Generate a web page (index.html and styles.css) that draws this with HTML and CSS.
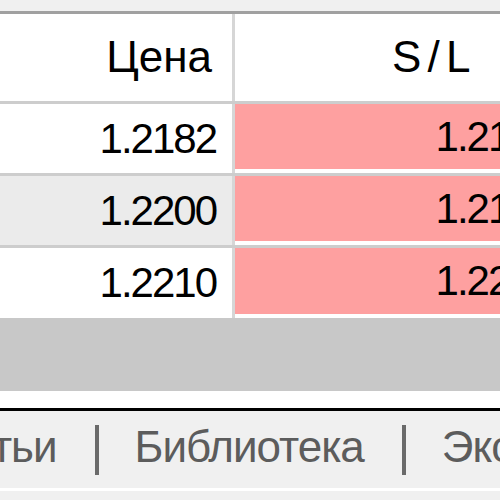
FILE: index.html
```html
<!DOCTYPE html>
<html lang="ru">
<head>
<meta charset="utf-8">
<link rel="stylesheet" href="styles.css">
</head>
<body>
<div class="top"></div>
<div class="table">
  <div class="row head">
    <div class="cell price">Цена</div>
    <div class="cell sl"><span class="sl-title">S / L</span></div>
  </div>
  <div class="row">
    <div class="cell price num">1.2182</div>
    <div class="cell sl"><div class="pink num">1.2170</div></div>
  </div>
  <div class="row alt">
    <div class="cell price num">1.2200</div>
    <div class="cell sl"><div class="pink num">1.2180</div></div>
  </div>
  <div class="row last">
    <div class="cell price num">1.2210</div>
    <div class="cell sl"><div class="pink num">1.2200</div></div>
  </div>
</div>
<div class="empty"></div>
<div class="gap"></div>
<div class="tabs">
  <span class="tab first">Статьи</span>
  <span class="sep"></span>
  <span class="tab">Библиотека</span>
  <span class="sep"></span>
  <span class="tab">Экспертс</span>
</div>
<div class="tabs-line"></div>
</body>
</html>
```
FILE: styles.css
```css
html, body {
  margin: 0;
  padding: 0;
  width: 500px;
  height: 500px;
  overflow: hidden;
  background: #f0f0f0;
  font-family: "Liberation Sans", Arial, sans-serif;
  font-size: 44px;
  color: #000;
}

.top {
  height: 11px;
  background: #f0f0f0;
  border-bottom: 3px solid #a0a0a0;
}

.table {
  width: 566px;
  background: #fff;
}

.row {
  display: flex;
  height: 69px;
  border-bottom: 3px solid #cdcdcd;
  background: #fff;
}

.row.head {
  height: 87px;
}

.row.alt .price {
  background: #ebebeb;
}

.row.last {
  height: 70px;
  border-bottom: none;
}

.cell {
  box-sizing: border-box;
  height: 100%;
}

.price {
  width: 235px;
  border-right: 3px solid #d6d6d6;
  text-align: right;
  padding-right: 16px;
  display: flex;
  align-items: center;
  justify-content: flex-end;
}

.head .price {
  padding-right: 20px;
  padding-bottom: 2px;
}

.sl {
  width: 331px;
  background: #fff;
}

.head .sl {
  display: flex;
  align-items: center;
  padding-left: 157px;
  padding-bottom: 2px;
}

.sl-title {
  letter-spacing: -2px;
  word-spacing: -2px;
}

.num {
  font-size: 42px;
  letter-spacing: -2px;
}

.pink {
  height: calc(100% - 4px);
  background: #fea0a0;
  display: flex;
  align-items: center;
  justify-content: flex-end;
  padding-right: 14px;
  box-sizing: border-box;
}

.empty {
  height: 73px;
  background: #c8c8c8;
}

.gap {
  height: 17px;
  background: #fff;
}

.tabs {
  border-top: 3px solid #000;
  border-bottom: 3px solid #fff;
  background: #f0f0f0;
  display: flex;
  align-items: center;
  color: #5c5c5c;
  white-space: nowrap;
  padding-bottom: 6px;
  box-sizing: content-box;
  height: 71px;
}

.tab {
  letter-spacing: -1px;
}

.tab.first {
  margin-left: -80px;
}

.sep {
  width: 4px;
  height: 50px;
  background: #6a6a6a;
  margin: 0 36px 0 38px;
  flex: none;
  position: relative;
  top: 3px;
}
```
